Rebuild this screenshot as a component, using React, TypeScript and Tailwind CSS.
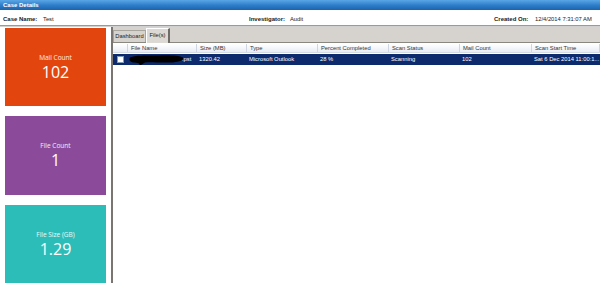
import React from "react";

const cols = [
  { w: 15, label: "" },
  { w: 69, label: "File Name" },
  { w: 50, label: "Size (MB)" },
  { w: 71, label: "Type" },
  { w: 71, label: "Percent Completed" },
  { w: 71, label: "Scan Status" },
  { w: 72, label: "Mail Count" },
  { w: 68, label: "Scan Start Time" },
];

function Tile({ color, label, value }: { color: string; label: string; value: string }) {
  return (
    <div className={`${color} h-[79px] w-[101px] flex flex-col items-center justify-center text-white`} style={{ fontFamily: '"Open Sans", sans-serif' }}>
      <div className="text-[6.5px] leading-[8px] text-white/90">{label}</div>
      <div className="text-[16px] leading-[16px] mt-[2px]">{value}</div>
    </div>
  );
}

export default function App() {
  const row = ["", "", "1320.42", "Microsoft Outlook", "28 %", "Scanning", "102", "Sat 6 Dec 2014 11:00:1..."];
  return (
    <div className="w-[600px] h-[283px] overflow-hidden bg-white flex flex-col" style={{ fontFamily: '"Liberation Sans", Arial, sans-serif' }}>
      <div className="h-[10px] shrink-0 bg-gradient-to-b from-[#5aa6e6] via-[#2f7fcb] to-[#1b64ad] text-white font-bold text-[6px] leading-[10px] pl-[3px]">
        Case Details
      </div>
      <div className="h-[15px] shrink-0 flex items-center pt-[3px] text-[5.8px] text-[#222]">
        <div className="w-[249px] pl-[3px] flex">
          <span className="font-bold text-[6px] w-[40px]">Case Name:</span>
          <span>Test</span>
        </div>
        <div className="w-[245px] flex">
          <span className="font-bold text-[6px] w-[41px]">Investigator:</span>
          <span>Audit</span>
        </div>
        <div className="flex">
          <span className="font-bold text-[6px] w-[41px]">Created On:</span>
          <span>12/4/2014 7:31:07 AM</span>
        </div>
      </div>
      <div className="h-[2px] shrink-0 bg-[#9a9a9a] border-b border-[#d0d0d0]" />
      <div className="flex flex-1 min-h-0">
        <div className="w-[111px] shrink-0 pl-[5px] pt-[1px] flex flex-col gap-[10px]">
          <Tile color="bg-[#e2450e]" label="Mail Count" value="102" />
          <Tile color="bg-[#8b4a9a]" label="File Count" value="1" />
          <Tile color="bg-[#2dbdb8]" label="File Size (GB)" value="1.29" />
        </div>
        <div className="flex-1 flex flex-col border-l-2 border-[#7a7570]">
          <div className="h-[16px] shrink-0 bg-[#d6d3ce] flex items-end border-b border-[#8a8680]">
            <div className="h-[12px] w-[33px] border border-[#a8a49e] border-b-0 bg-[#d6d3ce] text-[5.8px] text-[#222] flex items-center justify-center">
              Dashboard
            </div>
            <div className="h-[15px] w-[24px] border-l border-t border-white border-r-2 border-r-[#6f6b66] bg-[#dcd9d4] text-[5.8px] text-[#222] flex items-start pt-[2px] justify-center -mb-[1px]">
              File(s)
            </div>
          </div>
          <div className="flex-1 bg-white">
            <div className="flex h-[9px] mt-[1px] bg-gradient-to-b from-white to-[#e8edf5] border-b border-[#d5dbe5]">
              {cols.map((c, i) => (
                <div key={i} className="h-full border-r border-[#cfd6e1] text-[5.8px] leading-[9px] text-[#333] pl-[3px] whitespace-nowrap overflow-hidden" style={{ width: c.w }}>
                  {c.label}
                </div>
              ))}
            </div>
            <div className="flex h-[11px] mt-[1px] bg-[#0c2a6c] text-white">
              {cols.map((c, i) => (
                <div key={i} className="h-full text-[5.8px] leading-[11px] pl-[2px] whitespace-nowrap overflow-hidden relative flex items-center" style={{ width: c.w }}>
                  {i === 0 ? (
                    <div className="w-[7px] h-[7px] bg-white border border-[#7f9db9] ml-[2px]" />
                  ) : i === 1 ? (
                    <>
                      <svg width="56" height="11" viewBox="0 0 56 11" className="shrink-0 -ml-[1px]">
                        <path d="M1 3.5 C 6 1, 20 1.5, 30 1.5 C 40 1, 50 1.5, 54 3.5 C 55.5 6, 50 8.5, 40 8.5 C 30 9, 22 7.5, 16 8.5 C 14 9.5, 13 10.5, 12 11 L 10.5 11 C 11 9.5, 9 8.5, 4 8.5 C 0 7.5, 0 5, 1 3.5 Z" fill="#000" />
                      </svg>
                      <span className="-ml-[3px]">.pst</span>
                    </>
                  ) : (
                    row[i]
                  )}
                </div>
              ))}
            </div>
          </div>
        </div>
      </div>
    </div>
  );
}
